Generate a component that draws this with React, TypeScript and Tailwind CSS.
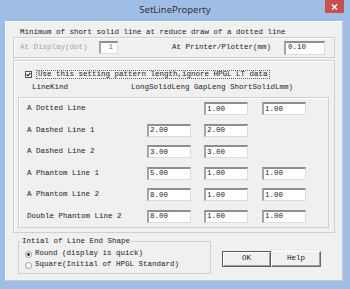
import React from "react";

type Row = { label: string; values: (string | null)[] };

const rows: Row[] = [
  { label: "A Dotted Line", values: [null, "1.00", "1.00"] },
  { label: "A Dashed Line 1", values: ["2.00", "2.00", null] },
  { label: "A Dashed Line 2", values: ["3.00", "3.00", null] },
  { label: "A Phantom Line 1", values: ["5.00", "1.00", "1.00"] },
  { label: "A Phantom Line 2", values: ["8.00", "1.00", "1.00"] },
  { label: "Double Phantom Line 2", values: ["8.00", "1.00", "1.00"] },
];

const sunken =
  "bg-white border-t-2 border-l-2 border-r border-b border-t-[#8e8e8e] border-l-[#a4a4a4] border-r-[#dcdcdc] border-b-[#dcdcdc]";

const etched = "border border-[#d0d0d0] shadow-[inset_1px_1px_0_#ffffff]";

function Field({ value }: { value: string | null }) {
  if (value === null) return <div className="w-[44px] h-[13px] shrink-0" />;
  return (
    <div className={`w-[44px] h-[13px] shrink-0 flex items-center pl-[1px] ${sunken}`}>
      {value}
    </div>
  );
}

function Radio({ checked }: { checked?: boolean }) {
  return (
    <svg width="7" height="7" viewBox="0 0 7 7" className="shrink-0">
      <circle cx="3.5" cy="3.5" r="3" fill="#fff" stroke="#8c8c8c" strokeWidth="0.9" />
      {checked ? <circle cx="3.5" cy="3.5" r="1.4" fill="#222" /> : null}
    </svg>
  );
}

export default function App() {
  return (
    <div className="w-[350px] h-[289px] bg-[#9ebee6] flex flex-col overflow-hidden font-['Liberation_Mono',monospace] text-[7.5px] leading-none text-[#222]">
      <div className="h-[21px] shrink-0 grid grid-cols-[1fr_auto_1fr] items-start">
        <div />
        <div className="pt-[3px] font-['Noto_Sans',sans-serif] text-[9.5px] leading-[13px] text-[#333]">
          SetLineProperty
        </div>
        <div className="flex justify-end pr-[6px]">
          <div className="w-[19px] h-[13px] bg-[#c75050] flex items-center justify-center">
            <svg width="7" height="6" viewBox="0 0 7 6">
              <path d="M1 0.5 L6 5.5 M6 0.5 L1 5.5" stroke="#fff" strokeWidth="1.3" />
            </svg>
          </div>
        </div>
      </div>

      <div className="flex-1 pl-[5px] pr-[7px] pb-[8px]">
        <div className="h-full bg-[#f0f0f0] border border-t-white border-l-white border-r-[#c8c8c8] border-b-[#c8c8c8] flex flex-col px-[7px]">
          <div className="h-[15px] flex items-end pb-[1px] pl-[7px]">
            Minimum of short solid line at reduce draw of a dotted line
          </div>

          <div className={`h-[21px] flex items-center pl-[6px] ${etched}`}>
            <span className="w-[79px] text-[#a3a3a3]">At Display(dot)</span>
            <div className={`w-[19px] h-[13px] flex items-center justify-end pr-[4px] text-[#6d6d6d] ${sunken}`}>
              1
            </div>
            <span className="ml-[54px]">At Printer/Plotter(mm)</span>
            <div className={`ml-[13px] w-[41px] h-[14px] flex items-center pl-[2px] ${sunken}`}>
              0.10
            </div>
          </div>

          <div className={`mt-[2px] h-[173px] flex flex-col ${etched}`}>
            <div className="mt-[9px] h-[9px] flex items-center pl-[11px]">
              <svg width="7" height="7" viewBox="0 0 7 7" className="shrink-0">
                <rect x="0.5" y="0.5" width="6" height="6" fill="#fff" stroke="#555" />
                <path d="M1.6 3.4 L2.9 4.8 L5.4 1.9" stroke="#111" strokeWidth="1.1" fill="none" />
              </svg>
              <span className="ml-[4px] h-[9px] flex items-center px-[1px] border border-dotted border-[#666]">
                Use this setting pattern length,ignore HPGL LT data
              </span>
            </div>

            <div className="mt-[5px] h-[8px] flex items-center pl-[18px]">
              <span className="w-[99px]">LineKind</span>
              <span>LongSolidLeng GapLeng ShortSolidLmm)</span>
            </div>

            <div className={`mt-[5px] ml-[4px] w-[311px] h-[131px] flex flex-col ${etched}`}>
              {rows.map((row) => (
                <div key={row.label} className="h-[21.5px] flex items-center pl-[8px]">
                  <span className="w-[120px] shrink-0">{row.label}</span>
                  <Field value={row.values[0]} />
                  <div className="ml-[13px]">
                    <Field value={row.values[1]} />
                  </div>
                  <div className="ml-[14px]">
                    <Field value={row.values[2]} />
                  </div>
                </div>
              ))}
            </div>
          </div>

          <div className="mt-[5px] flex items-start">
            <fieldset className="ml-[5px] w-[193px] h-[36px] border border-[#d0d0d0] pl-[6px]">
              <legend className="ml-[-4px] px-[1px]">Intial of Line End Shape</legend>
              <div className="mt-[3px] h-[11px] flex items-center gap-[3px]">
                <Radio checked />
                <span>Round (display is quick)</span>
              </div>
              <div className="h-[11px] flex items-center gap-[3px]">
                <Radio />
                <span>Square(Initial of HPGL Standard)</span>
              </div>
            </fieldset>

            <div className="ml-[11px] mt-[13px] flex">
              <div className="w-[49px] h-[16px] flex items-center justify-center bg-[#f0f0f0] border border-[#5a5a5a] shadow-[inset_1px_1px_0_#ffffff,inset_-1px_-1px_0_#a0a0a0]">
                OK
              </div>
              <div className="w-[50px] h-[16px] flex items-center justify-center bg-[#f0f0f0] border border-t-white border-l-white border-r-[#6a6a6a] border-b-[#6a6a6a] shadow-[inset_-1px_-1px_0_#a0a0a0]">
                Help
              </div>
            </div>
          </div>
        </div>
      </div>
    </div>
  );
}
